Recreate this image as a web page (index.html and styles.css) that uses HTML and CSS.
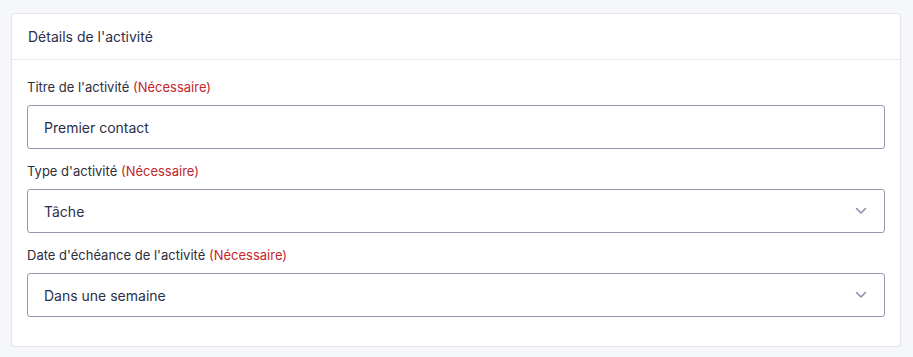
FILE: index.html
```html
<!DOCTYPE html>
<html lang="fr">
<head>
<meta charset="utf-8">
<link rel="stylesheet" href="styles.css">
</head>
<body>
<div class="card">
  <div class="card-header">Détails de l'activité</div>
  <div class="card-body">
    <div class="field">
      <label class="label">Titre de l'activité <span class="req">(Nécessaire)</span></label>
      <div class="input">Premier contact</div>
    </div>
    <div class="field">
      <label class="label">Type d'activité <span class="req">(Nécessaire)</span></label>
      <div class="input select">Tâche
        <svg class="chev" width="12" height="8" viewBox="0 0 12 8"><path d="M1.5 1.5 L6 6 L10.5 1.5" fill="none" stroke="#8f8daf" stroke-width="1.6" stroke-linecap="round" stroke-linejoin="round"/></svg>
      </div>
    </div>
    <div class="field">
      <label class="label">Date d'échéance de l'activité <span class="req">(Nécessaire)</span></label>
      <div class="input select">Dans une semaine
        <svg class="chev" width="12" height="8" viewBox="0 0 12 8"><path d="M1.5 1.5 L6 6 L10.5 1.5" fill="none" stroke="#8f8daf" stroke-width="1.6" stroke-linecap="round" stroke-linejoin="round"/></svg>
      </div>
    </div>
  </div>
</div>
</body>
</html>
```

FILE: styles.css
```css
html, body {
  margin: 0;
  padding: 0;
  background: #f5f7fa;
  font-family: Inter, "Liberation Sans", sans-serif;
}
body {
  padding: 13px 12px 0 11px;
}
.card {
  background: #fff;
  border: 1px solid #e3e6ec;
  border-radius: 4px;
  box-shadow: 0 1px 2px rgba(30, 40, 70, 0.06);
}
.card-header {
  height: 45px;
  display: flex;
  align-items: center;
  padding: 0 16px;
  border-bottom: 1px solid #e8eaef;
  font-size: 14px;
  color: #2b2f4b;
}
.card-body {
  padding: 18px 15px 29px 15px;
  display: flex;
  flex-direction: column;
  gap: 13px;
}
.field {
  display: flex;
  flex-direction: column;
}
.label {
  font-size: 13px;
  line-height: 18px;
  color: #2c2e3a;
  margin-bottom: 9px;
}
.req {
  color: #c1272d;
}
.input {
  height: 42px;
  border: 1px solid #9896b3;
  border-radius: 3px;
  display: flex;
  align-items: center;
  justify-content: space-between;
  padding: 0 17px 0 16px;
  font-size: 14px;
  color: #2b2f4b;
}
.chev {
  display: block;
}
```
